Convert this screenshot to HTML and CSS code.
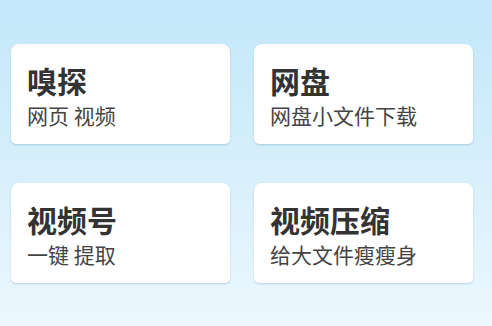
FILE: index.html
```html
<!DOCTYPE html>
<html lang="zh-CN">
<head>
<meta charset="utf-8">
<title>工具</title>
<link rel="stylesheet" href="styles.css">
</head>
<body>
<div class="page">
  <div class="grid">
    <div class="card">
      <div class="title">嗅探</div>
      <div class="sub">网页 视频</div>
    </div>
    <div class="card">
      <div class="title">网盘</div>
      <div class="sub">网盘小文件下载</div>
    </div>
    <div class="card">
      <div class="title">视频号</div>
      <div class="sub">一键 提取</div>
    </div>
    <div class="card">
      <div class="title">视频压缩</div>
      <div class="sub">给大文件瘦瘦身</div>
    </div>
  </div>
</div>
</body>
</html>
```
FILE: styles.css
```css
html, body {
  margin: 0;
  padding: 0;
}
body {
  width: 492px;
  height: 326px;
  overflow: hidden;
  background: linear-gradient(180deg, #c2e8fa 0%, #d6effb 50%, #edf8fe 100%);
  font-family: "Noto Sans CJK SC", "Noto Sans", sans-serif;
}
.page {
  padding: 44px 19px 0 11px;
}
.grid {
  display: grid;
  grid-template-columns: 219px 219px;
  column-gap: 24px;
  row-gap: 39px;
}
.card {
  height: 100px;
  box-sizing: border-box;
  background: #ffffff;
  border-radius: 8px 8px 5px 5px;
  box-shadow: 0 1px 2px rgba(90, 140, 170, 0.35);
  padding: 16px 16px 0 16px;
}
.title {
  font-size: 30px;
  font-weight: 700;
  line-height: 40px;
  color: #333333;
}
.sub {
  font-size: 21px;
  line-height: 30px;
  color: #444444;
}
```
